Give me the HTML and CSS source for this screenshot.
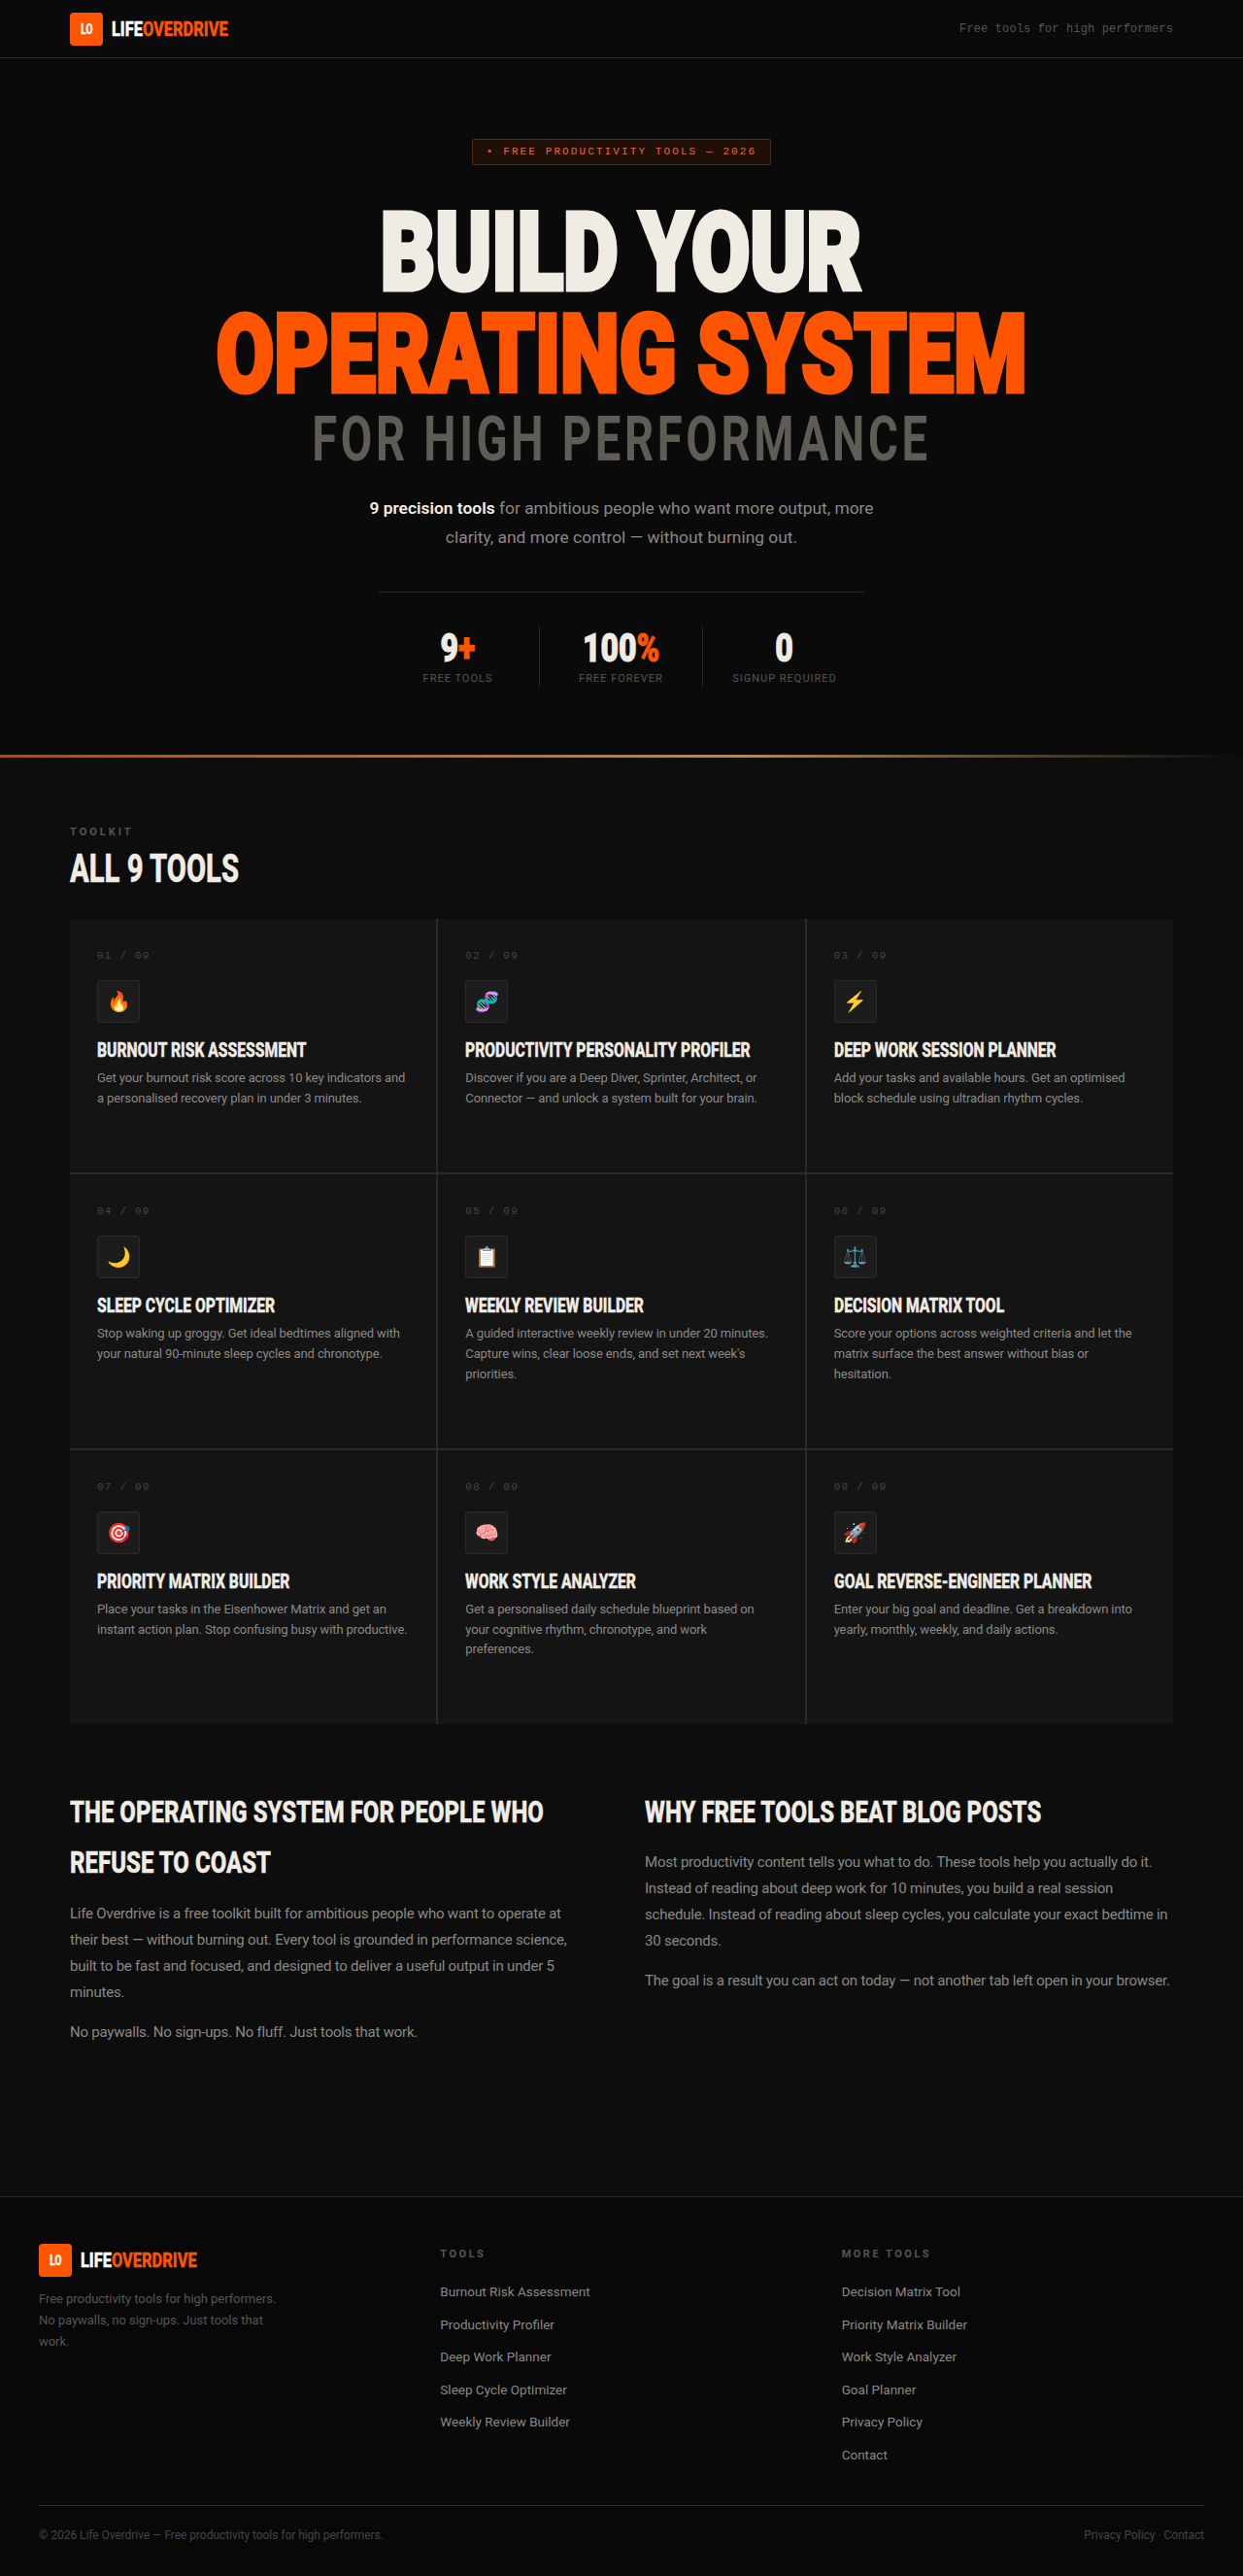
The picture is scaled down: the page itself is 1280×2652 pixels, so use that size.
FILE: index.html
```html
<!DOCTYPE html>
<html lang="en">
<head>
  <meta charset="UTF-8">
  <title>Life Overdrive</title>
  <link rel="stylesheet" href="styles.css">
</head>
<body>
  <div class="nav">
    <div class="brand">
      <span class="brand-mark"><span class="squeeze">LO</span></span>
      <span class="brand-name"><span class="squeeze">LIFE<em>OVERDRIVE</em></span></span>
    </div>
    <span class="nav-note">Free tools for high performers</span>
  </div>

  <section class="hero">
    <div class="hero-badge">• FREE PRODUCTIVITY TOOLS — 2026</div>
    <h1>
      <span class="line-one"><span class="squeeze">BUILD YOUR</span></span>
      <span class="line-two"><span class="squeeze">OPERATING SYSTEM</span></span>
      <span class="line-three"><span class="squeeze">FOR HIGH PERFORMANCE</span></span>
    </h1>
    <p class="hero-text"><strong>9 precision tools</strong> for ambitious people who want more output, more clarity, and more control — without burning out.</p>
    <div class="hero-stats">
      <div class="stat"><div class="stat-num"><span class="squeeze">9<em>+</em></span></div><div class="stat-label">FREE TOOLS</div></div>
      <div class="stat"><div class="stat-num"><span class="squeeze">100<em>%</em></span></div><div class="stat-label">FREE FOREVER</div></div>
      <div class="stat"><div class="stat-num"><span class="squeeze">0</span></div><div class="stat-label">SIGNUP REQUIRED</div></div>
    </div>
  </section>
  <div class="hero-rule"></div>

  <main class="content">
    <div class="eyebrow">TOOLKIT</div>
    <h2 class="section-title"><span class="squeeze">ALL 9 TOOLS</span></h2>

    <div class="tools">
      <div class="tool">
        <div class="tool-num">01 / 09</div>
        <div class="tool-icon">🔥</div>
        <h3><span class="squeeze">BURNOUT RISK ASSESSMENT</span></h3>
        <p>Get your burnout risk score across 10 key indicators and a personalised recovery plan in under 3 minutes.</p>
      </div>
      <div class="tool">
        <div class="tool-num">02 / 09</div>
        <div class="tool-icon">🧬</div>
        <h3><span class="squeeze">PRODUCTIVITY PERSONALITY PROFILER</span></h3>
        <p>Discover if you are a Deep Diver, Sprinter, Architect, or Connector — and unlock a system built for your brain.</p>
      </div>
      <div class="tool">
        <div class="tool-num">03 / 09</div>
        <div class="tool-icon">⚡</div>
        <h3><span class="squeeze">DEEP WORK SESSION PLANNER</span></h3>
        <p>Add your tasks and available hours. Get an optimised block schedule using ultradian rhythm cycles.</p>
      </div>
      <div class="tool">
        <div class="tool-num">04 / 09</div>
        <div class="tool-icon">🌙</div>
        <h3><span class="squeeze">SLEEP CYCLE OPTIMIZER</span></h3>
        <p>Stop waking up groggy. Get ideal bedtimes aligned with your natural 90-minute sleep cycles and chronotype.</p>
      </div>
      <div class="tool">
        <div class="tool-num">05 / 09</div>
        <div class="tool-icon">📋</div>
        <h3><span class="squeeze">WEEKLY REVIEW BUILDER</span></h3>
        <p>A guided interactive weekly review in under 20 minutes. Capture wins, clear loose ends, and set next week's priorities.</p>
      </div>
      <div class="tool">
        <div class="tool-num">06 / 09</div>
        <div class="tool-icon">⚖️</div>
        <h3><span class="squeeze">DECISION MATRIX TOOL</span></h3>
        <p>Score your options across weighted criteria and let the matrix surface the best answer without bias or hesitation.</p>
      </div>
      <div class="tool">
        <div class="tool-num">07 / 09</div>
        <div class="tool-icon">🎯</div>
        <h3><span class="squeeze">PRIORITY MATRIX BUILDER</span></h3>
        <p>Place your tasks in the Eisenhower Matrix and get an instant action plan. Stop confusing busy with productive.</p>
      </div>
      <div class="tool">
        <div class="tool-num">08 / 09</div>
        <div class="tool-icon">🧠</div>
        <h3><span class="squeeze">WORK STYLE ANALYZER</span></h3>
        <p>Get a personalised daily schedule blueprint based on your cognitive rhythm, chronotype, and work preferences.</p>
      </div>
      <div class="tool">
        <div class="tool-num">09 / 09</div>
        <div class="tool-icon">🚀</div>
        <h3><span class="squeeze">GOAL REVERSE-ENGINEER PLANNER</span></h3>
        <p>Enter your big goal and deadline. Get a breakdown into yearly, monthly, weekly, and daily actions.</p>
      </div>
    </div>

    <div class="about">
      <div class="about-left">
        <h2><span class="squeeze">THE OPERATING SYSTEM FOR PEOPLE WHO<br>REFUSE TO COAST</span></h2>
        <p>Life Overdrive is a free toolkit built for ambitious people who want to operate at their best — without burning out. Every tool is grounded in performance science, built to be fast and focused, and designed to deliver a useful output in under 5 minutes.</p>
        <p>No paywalls. No sign-ups. No fluff. Just tools that work.</p>
      </div>
      <div>
        <h2><span class="squeeze">WHY FREE TOOLS BEAT BLOG POSTS</span></h2>
        <p>Most productivity content tells you what to do. These tools help you actually do it. Instead of reading about deep work for 10 minutes, you build a real session schedule. Instead of reading about sleep cycles, you calculate your exact bedtime in 30 seconds.</p>
        <p>The goal is a result you can act on today — not another tab left open in your browser.</p>
      </div>
    </div>
  </main>

  <footer class="footer">
    <div class="footer-grid">
      <div>
        <div class="brand">
          <span class="brand-mark"><span class="squeeze">LO</span></span>
          <span class="brand-name"><span class="squeeze">LIFE<em>OVERDRIVE</em></span></span>
        </div>
        <p class="footer-about">Free productivity tools for high performers. No paywalls, no sign-ups. Just tools that work.</p>
      </div>
      <div>
        <div class="footer-head">TOOLS</div>
        <a href="#">Burnout Risk Assessment</a>
        <a href="#">Productivity Profiler</a>
        <a href="#">Deep Work Planner</a>
        <a href="#">Sleep Cycle Optimizer</a>
        <a href="#">Weekly Review Builder</a>
      </div>
      <div>
        <div class="footer-head">MORE TOOLS</div>
        <a href="#">Decision Matrix Tool</a>
        <a href="#">Priority Matrix Builder</a>
        <a href="#">Work Style Analyzer</a>
        <a href="#">Goal Planner</a>
        <a href="#">Privacy Policy</a>
        <a href="#">Contact</a>
      </div>
    </div>
    <div class="footer-bottom">
      <span>© 2026 Life Overdrive — Free productivity tools for high performers.</span>
      <span>Privacy Policy · Contact</span>
    </div>
  </footer>
</body>
</html>
```

FILE: styles.css
```css
* {
  box-sizing: border-box;
}
body {
  margin: 0;
  background-color: #0a0a0a;
  color: #f0ece4;
  font-family: "Roboto", "Liberation Sans", sans-serif;
}
em {
  font-style: normal;
  color: #ff5500;
}

/* narrow display type: no condensed face installed, so squeeze it */
.squeeze {
  display: inline-block;
  white-space: nowrap;
  font-family: "Roboto", sans-serif;
  font-weight: 800;
  transform-origin: left center;
  -webkit-text-stroke: .4px currentColor;
}
.squeeze em {
  -webkit-text-stroke: .4px #ff5500;
}

.nav {
  height: 60px;
  padding: 0 72px;
  display: flex;
  align-items: center;
  justify-content: space-between;
  border-bottom: 1px solid #2a2a2a;
}
.brand {
  display: flex;
  align-items: center;
  gap: 9px;
}
.brand-mark {
  width: 34px;
  height: 34px;
  border-radius: 4px;
  background-color: #ff5500;
  color: #fff;
  font-size: 14px;
  display: flex;
  align-items: center;
  justify-content: center;
}
.brand-mark .squeeze {
  transform: scaleX(.72);
  transform-origin: center;
}
.brand-name {
  display: block;
  width: 124px;
  font-size: 21px;
  color: #fff;
}
.brand-name .squeeze {
  transform: scaleX(.78);
}
.nav-note {
  font-family: "Liberation Mono", monospace;
  font-size: 12px;
  letter-spacing: .13px;
  color: #555;
}

.hero {
  height: 717px;
  padding-top: 83px;
  display: flex;
  flex-direction: column;
  align-items: center;
  text-align: center;
}
.hero-badge {
  width: 308px;
  height: 27px;
  line-height: 25px;
  border: 1px solid #5a2a14;
  border-radius: 2px;
  background-color: #1f0f07;
  color: #e8683a;
  font-family: "Liberation Mono", monospace;
  font-size: 11px;
  letter-spacing: 2.1px;
  white-space: nowrap;
}
h1 {
  margin: 37px 0 0;
  width: 100%;
}
h1 > span {
  display: block;
}
h1 .squeeze {
  font-weight: 900;
  transform-origin: center;
  -webkit-text-stroke: 5px currentColor;
}
.line-one {
  font-size: 112px;
  line-height: 105px;
  color: #f0ece4;
}
.line-one .squeeze {
  transform: scaleX(.78);
}
.line-two {
  font-size: 112px;
  line-height: 105px;
  color: #ff5500;
}
.line-two .squeeze {
  transform: scaleX(.77);
}
.line-three {
  font-size: 65px;
  line-height: 70px;
  letter-spacing: 5px;
  color: #5f5b55;
}
h1 .line-three .squeeze {
  font-weight: 700;
  transform: scaleX(.726);
  -webkit-text-stroke: 0;
}
.hero-text {
  margin: 21px 0 0;
  width: 540px;
  font-size: 17.4px;
  line-height: 30px;
  color: #8a8884;
}
.hero-text strong {
  color: #f0ece4;
  font-weight: 600;
}
.hero-stats {
  margin-top: 41px;
  width: 500px;
  padding-top: 35px;
  border-top: 1px solid #2a2a2a;
  display: flex;
  justify-content: center;
}
.stat {
  flex: 0 0 168px;
  height: 62px;
  border-right: 1px solid #2a2a2a;
  padding-top: 5px;
}
.stat:last-child {
  border-right: none;
}
.stat-num {
  font-size: 40px;
  line-height: 36px;
  color: #f0ece4;
}
.stat-num .squeeze {
  font-weight: 900;
  transform: scaleX(.8);
  transform-origin: center;
  -webkit-text-stroke: 1px currentColor;
}
.stat-num .squeeze em {
  -webkit-text-stroke: 1px #ff5500;
}
.stat-label {
  margin-top: 6px;
  font-size: 11px;
  letter-spacing: 1px;
  color: #555;
}
.hero-rule {
  height: 3px;
  background: linear-gradient(90deg, #ff5500, #ffb347 60%, transparent);
  opacity: .75;
}

.content {
  padding: 69px 72px 0;
  height: 1481px;
  background-color: #0d0d0d;
}
.eyebrow {
  font-size: 11px;
  font-weight: 700;
  letter-spacing: 3px;
  line-height: 16px;
  color: #555;
}
.section-title {
  margin: 8px 0 0;
  font-size: 40px;
  line-height: 44px;
  color: #f0ece4;
}
.section-title .squeeze {
  transform: scaleX(.73);
}
.tools {
  margin-top: 29px;
  display: grid;
  grid-template-columns: repeat(3, minmax(0, 1fr));
  gap: 2px;
  background-color: #2a2a2a;
}
.tool {
  padding: 28px 28px 65.4px;
  background-color: #141414;
}
.tool-num {
  font-family: "Liberation Mono", monospace;
  font-size: 11px;
  letter-spacing: 1.2px;
  line-height: 20px;
  color: #444;
}
.tool-icon {
  margin-top: 15px;
  width: 44px;
  height: 44px;
  border: 1px solid #2a2a2a;
  border-radius: 3px;
  background-color: #1c1c1c;
  display: flex;
  align-items: center;
  justify-content: center;
  font-size: 20px;
}
.tool h3 {
  margin: 15px 0 0;
  font-size: 21px;
  line-height: 26px;
  color: #f0ece4;
}
.tool h3 .squeeze {
  transform: scaleX(.745);
}
.tool p {
  margin: 6px 0 0;
  font-size: 13px;
  letter-spacing: -.12px;
  line-height: 20.8px;
  color: #8a8884;
}

.about {
  margin-top: 64px;
  display: grid;
  grid-template-columns: repeat(2, minmax(0, 1fr));
  gap: 48px;
}
.about h2 {
  margin: 0 0 13px;
  font-size: 32px;
  line-height: 52.8px;
  color: #f0ece4;
}
.about h2 .squeeze {
  transform: scaleX(.75);
}
.about p {
  margin: 0 0 14px;
  font-size: 15px;
  letter-spacing: -.22px;
  line-height: 27px;
  color: #8a8884;
}
.about-left p {
  max-width: 530px;
}

.footer {
  height: 390px;
  padding: 48px 40px 0;
  background-color: #080808;
  border-top: 1px solid #2a2a2a;
}
.footer-grid {
  display: grid;
  grid-template-columns: repeat(3, minmax(0, 1fr));
  gap: 40px;
  height: 269px;
}
.footer-about {
  margin: 12px 0 0;
  width: 260px;
  font-size: 13px;
  letter-spacing: -.05px;
  line-height: 22px;
  color: #555;
}
.footer-head {
  margin-top: 3px;
  margin-bottom: 18px;
  font-size: 11px;
  font-weight: 700;
  letter-spacing: 2.5px;
  line-height: 16px;
  color: #555;
}
.footer-grid a {
  display: block;
  height: 33.6px;
  line-height: 24px;
  font-size: 13.5px;
  color: #8a8884;
  text-decoration: none;
}
.footer-bottom {
  padding-top: 21px;
  border-top: 1px solid #2a2a2a;
  display: flex;
  justify-content: space-between;
  font-size: 12px;
  letter-spacing: -.05px;
  line-height: 18px;
  color: #444;
}
```
